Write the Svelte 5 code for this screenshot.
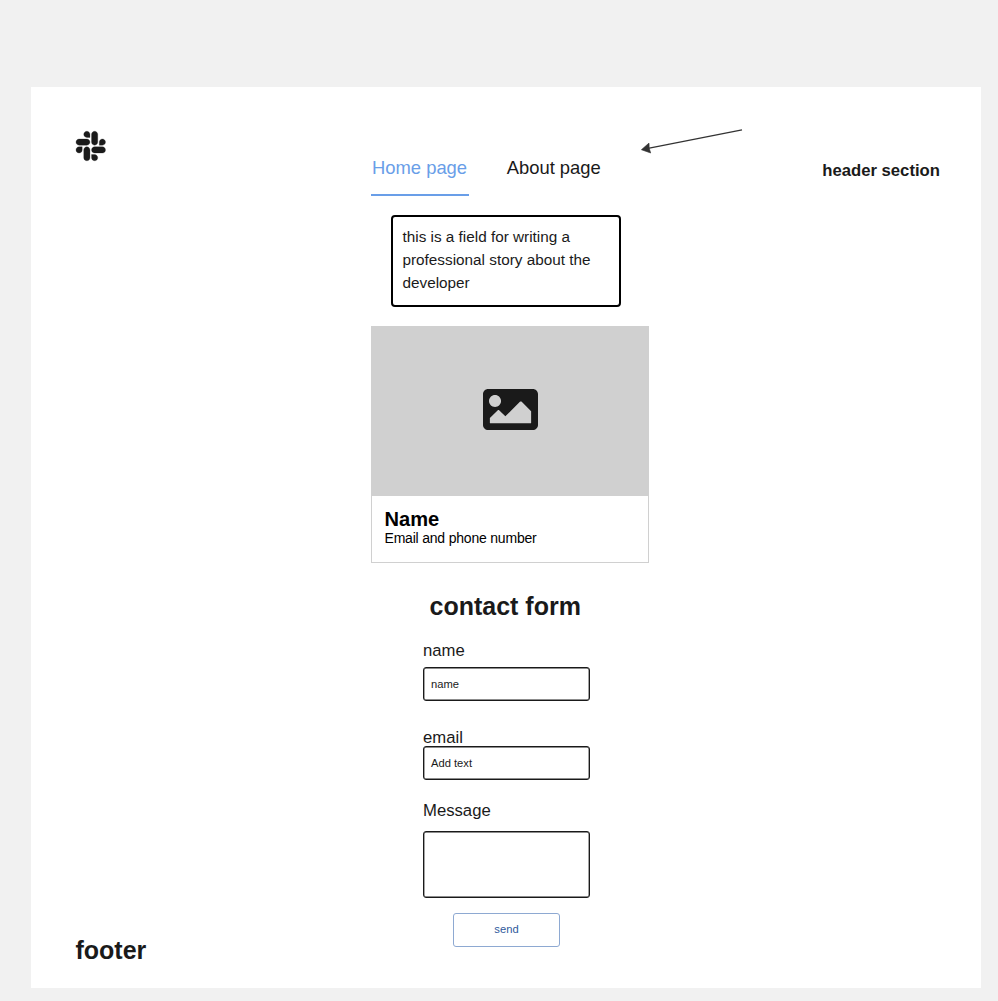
<script>
  const tabs = [
    { label: 'Home page', active: true },
    { label: 'About page', active: false }
  ];
</script>

<div class="page">
  <header>
    <svg class="logo" viewBox="0 32 448 448" aria-hidden="true">
      <path d="M94.12 315.1c0 25.9-21.16 47.06-47.06 47.06S0 341 0 315.1c0-25.9 21.16-47.06 47.06-47.06h47.06v47.06zm23.72 0c0-25.9 21.16-47.06 47.06-47.06s47.06 21.16 47.06 47.06v117.84c0 25.9-21.16 47.06-47.06 47.06s-47.06-21.16-47.06-47.06V315.1zm47.06-188.98c-25.9 0-47.06-21.16-47.06-47.06S139 32 164.9 32s47.06 21.16 47.06 47.06v47.06H164.9zm0 23.72c25.9 0 47.06 21.16 47.06 47.06s-21.16 47.06-47.06 47.06H47.06C21.16 243.96 0 222.8 0 196.9s21.16-47.06 47.06-47.06H164.9zm188.98 47.06c0-25.9 21.16-47.06 47.06-47.06 25.9 0 47.06 21.16 47.06 47.06s-21.16 47.06-47.06 47.06h-47.06V196.9zm-23.72 0c0 25.9-21.16 47.06-47.06 47.06-25.9 0-47.06-21.16-47.06-47.06V79.06c0-25.9 21.16-47.06 47.06-47.06 25.9 0 47.06 21.16 47.06 47.06V196.9zM283.1 385.88c25.9 0 47.06 21.16 47.06 47.06 0 25.9-21.16 47.06-47.06 47.06-25.9 0-47.06-21.16-47.06-47.06v-47.06h47.06zm0-23.72c-25.9 0-47.06-21.16-47.06-47.06 0-25.9 21.16-47.06 47.06-47.06h117.84c25.9 0 47.06 21.16 47.06 47.06 0 25.9-21.16 47.06-47.06 47.06H283.1z" />
    </svg>
    <nav>
      {#each tabs as tab}
        <span class="tab" class:active={tab.active}>{tab.label}</span>
      {/each}
    </nav>
    <svg class="arrow" viewBox="0 0 104 30" aria-hidden="true">
      <path d="M7 20.4 101 1.8" fill="none" stroke="#333" stroke-width="1.3" />
      <path d="M0.4 21.7 8 15.1 8.2 20.2 9.7 25Z" fill="#333" stroke="#333" stroke-width="0.6" />
    </svg>
    <strong class="section-name">header section</strong>
  </header>

  <main>
    <p class="story">this is a field for writing a professional story about the developer</p>

    <article class="card">
      <div class="picture">
        <svg viewBox="0 64 512 384" preserveAspectRatio="none" aria-hidden="true">
          <path d="M464 448H48c-26.51 0-48-21.49-48-48V112c0-26.51 21.49-48 48-48h416c26.51 0 48 21.49 48 48v288c0 26.51-21.49 48-48 48zM112 120c-30.928 0-56 25.072-56 56s25.072 56 56 56 56-25.072 56-56-25.072-56-56-56zM64 384h384V272l-87.515-87.515c-4.686-4.686-12.284-4.686-16.971 0L208 320l-55.515-55.515c-4.686-4.686-12.284-4.686-16.971 0L64 336v48z" />
        </svg>
      </div>
      <div class="details">
        <h3>Name</h3>
        <p>Email and phone number</p>
      </div>
    </article>

    <form>
      <h2>contact form</h2>
      <span class="label first">name</span>
      <div class="field">name</div>
      <span class="label second">email</span>
      <div class="field">Add text</div>
      <span class="label third">Message</span>
      <div class="field message"></div>
      <button type="button">send</button>
    </form>
  </main>

  <footer>footer</footer>
</div>

<style>
  :global(body) {
    margin: 0;
    background: #f1f1f1;
  }

  .page {
    box-sizing: border-box;
    display: flow-root;
    width: 950px;
    height: 901px;
    margin: 87px 0 13px 31px;
    background: #fff;
    color: #1a1a1a;
    font-family: 'Liberation Sans', Arial, sans-serif;
  }

  h2, h3, p {
    margin: 0;
  }

  header {
    display: flex;
    align-items: flex-start;
    height: 109px;
    padding: 0 41px 0 45px;
  }

  .logo {
    width: 29.5px;
    height: 30px;
    margin: 43.5px 0.5px 0 0;
    fill: #1a1a1a;
    stroke: #1a1a1a;
    stroke-width: 4px;
    overflow: visible;
  }

  nav {
    display: flex;
    gap: 36.6px;
    margin: 69px 0 0 265px;
    font-size: 18.4px;
    line-height: 24px;
  }

  .tab {
    padding: 0 1.4px 14px 1px;
    border-bottom: 2px solid transparent;
    white-space: nowrap;
  }

  .tab:first-child {
    padding-right: 2px;
  }

  .active {
    color: #699ee8;
    border-color: #699ee8;
  }

  .arrow {
    width: 104px;
    height: 30px;
    margin: 41px 0 0 38.6px;
  }

  .section-name {
    margin: 74px 0 0 auto;
    font-size: 16.7px;
    line-height: 20px;
    white-space: nowrap;
  }

  main {
    display: flex;
    flex-direction: column;
    align-items: flex-start;
    width: 278px;
    margin-left: 340px;
  }

  .story {
    box-sizing: border-box;
    width: 230px;
    height: 92px;
    margin: 19px 0 0 20px;
    padding: 8px 9.5px;
    border: 2px solid #000;
    border-radius: 4px;
    font-size: 15.3px;
    line-height: 23px;
  }

  .card {
    box-sizing: border-box;
    width: 278px;
    height: 237px;
    margin-top: 19px;
    border: 1px solid #d0d0d0;
  }

  .picture {
    display: flex;
    align-items: center;
    justify-content: center;
    height: 169px;
    background: #d0d0d0;
  }

  .picture svg {
    width: 55px;
    height: 41px;
    margin-bottom: 4px;
    fill: #1a1a1a;
  }

  .details {
    padding: 13px 12.5px 0;
    color: #000;
  }

  h3 {
    font-size: 20.1px;
    line-height: 20px;
  }

  .details p {
    font-size: 14px;
    line-height: 18px;
    letter-spacing: -0.2px;
  }

  form {
    display: flex;
    flex-direction: column;
    width: 167px;
    margin: 28px 0 0 52px;
  }

  h2 {
    margin-left: 6.5px;
    font-size: 25px;
    line-height: 30px;
    white-space: nowrap;
  }

  .label {
    font-size: 16.7px;
    line-height: 20px;
  }

  .first {
    margin: 20px 0 6px;
  }

  .second {
    margin: 27px 0 -2px;
  }

  .third {
    margin: 21px 0 10px;
  }

  .field {
    box-sizing: border-box;
    height: 34px;
    padding: 0 7px;
    border: 1px solid #1a1a1a;
    border-radius: 3px;
    box-shadow: inset 0 0 0 0.4px #1a1a1a;
    font-size: 11.2px;
    line-height: 32px;
  }

  .message {
    height: 67px;
  }

  button {
    width: 107px;
    height: 34px;
    margin: 15px 0 0 30px;
    padding: 0 0 2px;
    border: 1px solid #8ea9d2;
    border-radius: 3px;
    background: #fff;
    color: #305a9c;
    font: 11.2px 'Liberation Sans', Arial, sans-serif;
  }

  footer {
    margin: -12px 0 0 44.5px;
    font-size: 25px;
    font-weight: 700;
    line-height: 30px;
  }
</style>
